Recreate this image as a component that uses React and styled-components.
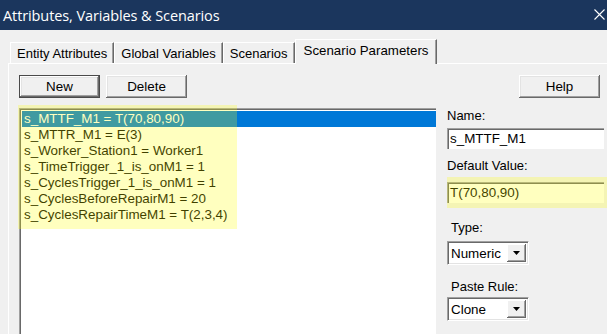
import React from "react";
import styled, { createGlobalStyle, css } from "styled-components";

const GlobalStyle = createGlobalStyle`
  html, body {
    margin: 0;
    padding: 0;
    background: #f0f0f0;
  }
  body {
    font-family: "Liberation Sans", Arial, sans-serif;
    font-size: 13px;
    color: #000;
  }
`;

const scenarioParams = [
  "s_MTTF_M1 = T(70,80,90)",
  "s_MTTR_M1 = E(3)",
  "s_Worker_Station1 = Worker1",
  "s_TimeTrigger_1_is_onM1 = 1",
  "s_CyclesTrigger_1_is_onM1 = 1",
  "s_CyclesBeforeRepairM1 = 20",
  "s_CyclesRepairTimeM1 = T(2,3,4)",
];

const tabs = ["Entity Attributes", "Global Variables", "Scenarios", "Scenario Parameters"];

const DownArrow = () => (
  <svg width="7" height="4" viewBox="0 0 7 4">
    <path d="M0 0 H7 L3.5 4 Z" fill="#000" />
  </svg>
);

const App = () => {
  return (
    <>
      <GlobalStyle />
      <Window>
        <TitleBar>
          <Title>Attributes, Variables &amp; Scenarios</Title>
          <CloseIcon width="11" height="11" viewBox="0 0 11 11">
            <path d="M0.5 0.5 L10.5 10.5 M10.5 0.5 L0.5 10.5" stroke="#fff" strokeWidth="1.1" />
          </CloseIcon>
        </TitleBar>

        <Body>
          <TabStrip>
            {tabs.map((t, i) => (
              <Tab key={t} $active={i === tabs.length - 1}>
                {t}
              </Tab>
            ))}
          </TabStrip>

          <Panel>
            <Toolbar>
              <Button $default>New</Button>
              <Button>Delete</Button>
              <HelpButton>Help</HelpButton>
            </Toolbar>

            <Content>
              <ListWrap>
                <ListBox>
                  {scenarioParams.map((p, i) => (
                    <ListRow key={p} $selected={i === 0}>
                      {p}
                    </ListRow>
                  ))}
                </ListBox>
                <ListMarker />
              </ListWrap>

              <SideForm>
                <Label>Name:</Label>
                <TextBox>s_MTTF_M1</TextBox>

                <Label $top={9}>Default Value:</Label>
                <MarkedField>
                  <TextBox>T(70,80,90)</TextBox>
                  <FieldMarker />
                </MarkedField>

                <Label $top={17} $indent>
                  Type:
                </Label>
                <Combo $top={5}>
                  <ComboText>Numeric</ComboText>
                  <ComboArrow>
                    <DownArrow />
                  </ComboArrow>
                </Combo>

                <Label $top={14} $indent>
                  Paste Rule:
                </Label>
                <Combo $top={2}>
                  <ComboText>Clone</ComboText>
                  <ComboArrow>
                    <DownArrow />
                  </ComboArrow>
                </Combo>
              </SideForm>
            </Content>
          </Panel>
        </Body>
      </Window>
    </>
  );
};

const Window = styled.div`
  width: 607px;
  height: 334px;
  overflow: hidden;
  display: flex;
  flex-direction: column;
  background: #f0f0f0;
`;

const TitleBar = styled.div`
  height: 30px;
  flex: none;
  background: #1b365d;
  display: flex;
  align-items: center;
  justify-content: space-between;
  padding: 0 2px 0 3px;
`;

const Title = styled.span`
  font-family: "Open Sans", "Noto Sans", sans-serif;
  font-size: 14.5px;
  color: #fff;
  letter-spacing: -0.1px;
`;

const CloseIcon = styled.svg`
  display: block;
  margin-bottom: 2px;
`;

const Body = styled.div`
  flex: 1;
  display: flex;
  flex-direction: column;
  padding: 9px 0 0 8px;
  min-height: 0;
`;

const TabStrip = styled.div`
  display: flex;
  align-items: flex-end;
  height: 24px;
  padding-left: 2px;
  position: relative;
  z-index: 1;
`;

const Tab = styled.div`
  height: 21px;
  line-height: 21px;
  padding: 0 6px;
  font-size: 13px;
  background: #f0f0f0;
  border-top: 1px solid #fff;
  border-left: 1px solid #fff;
  border-right: 1px solid #696969;
  box-shadow: inset -1px 0 #a0a0a0;
  white-space: nowrap;
  box-sizing: border-box;

  ${(p) =>
    p.$active &&
    css`
      height: 25px;
      line-height: 22px;
      padding: 0 8px;
      font-size: 13.3px;
      margin-bottom: -1px;
    `}
`;

const Panel = styled.div`
  flex: 1;
  min-height: 0;
  border-top: 1px solid #fff;
  border-left: 1px solid #fff;
  padding: 11px 7px 0 10px;
  display: flex;
  flex-direction: column;
`;

const Toolbar = styled.div`
  display: flex;
  gap: 6px;
`;

const Button = styled.button`
  width: 81px;
  height: 23px;
  padding: 0;
  font-family: "Liberation Sans", Arial, sans-serif;
  font-size: 13.4px;
  color: #000;
  background: #f0f0f0;
  border: ${(p) => (p.$default ? "1px solid #4a4a4a" : "none")};
  box-shadow: inset -1px -1px #696969, inset 1px 1px #fff, inset -2px -2px #a0a0a0,
    inset 2px 2px #e3e3e3;
`;

const HelpButton = styled(Button)`
  margin-left: auto;
`;

const Content = styled.div`
  flex: 1;
  display: flex;
  gap: 11px;
  margin-top: 10px;
`;

const ListWrap = styled.div`
  position: relative;
  width: 417px;
  flex: none;
`;

const ListBox = styled.div`
  height: 240px;
  background: #fff;
  border-top: 1px solid #a0a0a0;
  border-left: 1px solid #a0a0a0;
  box-shadow: inset 1px 1px #696969;
  padding: 2px 0 0 2px;
  box-sizing: border-box;
`;

const ListRow = styled.div`
  height: 16px;
  line-height: 16px;
  padding-left: 2px;
  font-size: 13.4px;
  white-space: nowrap;
  ${(p) =>
    p.$selected &&
    css`
      background: #0078d7;
      color: #fff;
    `}
`;

const ListMarker = styled.div`
  position: absolute;
  top: -3px;
  left: -1px;
  width: 219px;
  height: 124px;
  background: rgba(255, 255, 0, 0.25);
  pointer-events: none;
`;

const SideForm = styled.div`
  flex: 1;
  display: flex;
  flex-direction: column;
  align-items: flex-start;
`;

const Label = styled.div`
  margin-top: ${(p) => p.$top ?? 0}px;
  padding-left: ${(p) => (p.$indent ? 4 : 0)}px;
  line-height: 16px;
  font-size: 13px;
`;

const TextBox = styled.div`
  width: 157px;
  height: 21px;
  margin-top: 4px;
  box-sizing: border-box;
  background: #fff;
  border-top: 1px solid #a0a0a0;
  border-left: 1px solid #a0a0a0;
  box-shadow: inset 1px 1px #696969;
  padding: 1px 0 0 2px;
  line-height: 18px;
  font-size: 13.4px;
  white-space: nowrap;
`;

const MarkedField = styled.div`
  position: relative;
  margin-top: 4px;
`;

const FieldMarker = styled.div`
  position: absolute;
  top: -1px;
  left: 0;
  right: -10px;
  bottom: -5px;
  background: rgba(255, 255, 0, 0.25);
  pointer-events: none;
`;

const Combo = styled.div`
  margin-top: ${(p) => p.$top}px;
  width: 82px;
  height: 24px;
  box-sizing: border-box;
  display: flex;
  align-items: stretch;
  background: #fff;
  border: 1px solid;
  border-color: #a0a0a0 #fff #fff #a0a0a0;
  box-shadow: inset 1px 1px #696969, inset -1px -1px #e3e3e3;
  padding: 2px;
`;

const ComboText = styled.div`
  flex: 1;
  line-height: 19px;
  font-size: 13.4px;
  padding-left: 1px;
`;

const ComboArrow = styled.div`
  width: 19px;
  display: flex;
  align-items: center;
  justify-content: center;
  background: #f0f0f0;
  box-shadow: inset -1px -1px #696969, inset 1px 1px #fff, inset -2px -2px #a0a0a0;
`;

export default App;
